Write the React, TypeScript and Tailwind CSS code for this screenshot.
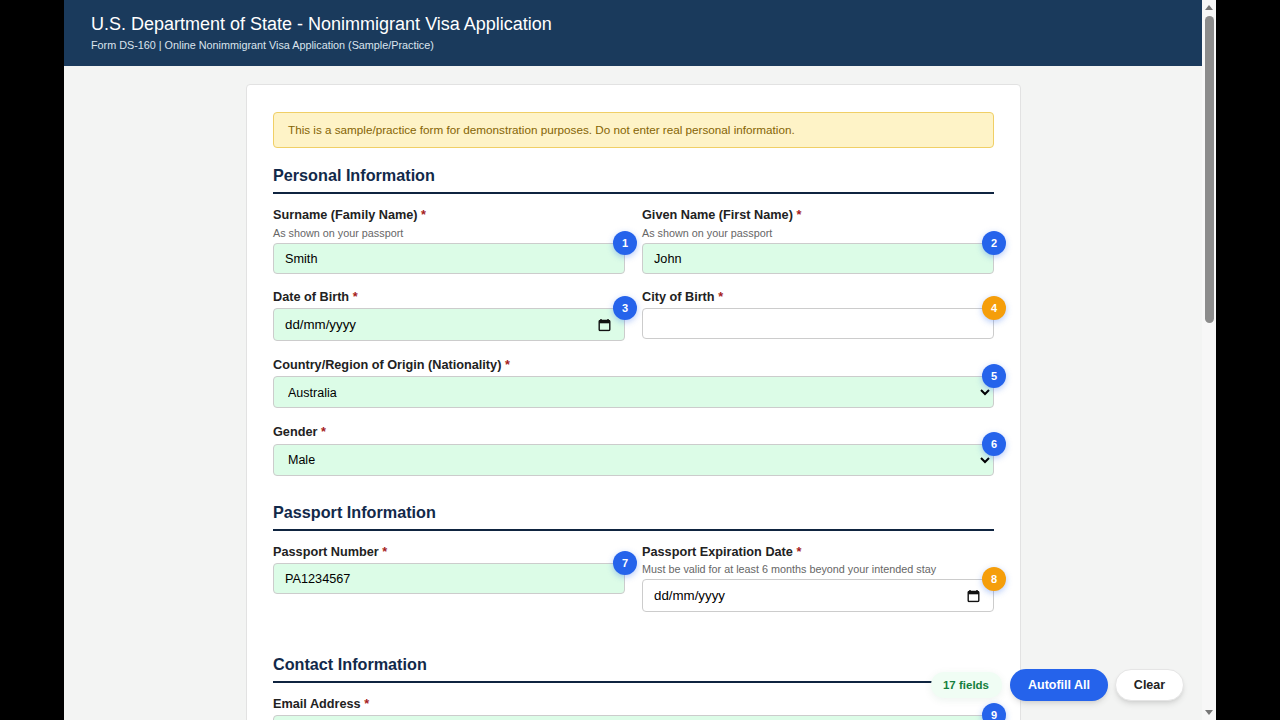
const Badge = ({ n, warn }: { n: number; warn?: boolean }) => (
  <span
    className={`absolute -right-3 -top-3 z-10 flex h-6 w-6 items-center justify-center rounded-full text-[11px] font-bold text-white shadow-[0_2px_6px_rgba(37,99,235,0.35)] ${
      warn ? "bg-[#f59e0b]" : "bg-[#2563eb]"
    }`}
  >
    {n}
  </span>
);

const Label = ({ text, mb = "mb-[3px]" }: { text: string; mb?: string }) => (
  <label className={`block h-4 text-[12.7px] leading-4 font-bold text-[#222] ${mb}`}>
    {text} <span className="text-[#a51c1c]">*</span>
  </label>
);

const Hint = ({ text }: { text: string }) => (
  <p className="mb-[3px] h-[14px] text-[10.8px] leading-[14px] text-[#666]">{text}</p>
);

const CalendarIcon = () => (
  <svg className="absolute right-[14px] top-1/2 h-[13px] w-[13px] -translate-y-1/2" viewBox="0 0 13 13" fill="none">
    <path d="M3 0.5v2M10 0.5v2" stroke="#111" strokeWidth="1.4" />
    <rect x="1.2" y="2" width="10.6" height="10" rx="1" stroke="#111" strokeWidth="1.4" />
    <rect x="1.2" y="2" width="10.6" height="2.8" fill="#111" />
  </svg>
);

const Field = ({
  label,
  hint,
  value,
  n,
  warn,
  date,
  tight,
  filled = true,
}: {
  label: string;
  hint?: string;
  value?: string;
  n: number;
  warn?: boolean;
  date?: boolean;
  tight?: boolean;
  filled?: boolean;
}) => (
  <div>
    <Label text={label} mb={tight ? "mb-[2px]" : "mb-[3px]"} />
    {hint && <Hint text={hint} />}
    <div className="relative">
      <input
        readOnly
        value={value ?? ""}
        className={`block w-full rounded border border-[#ccc] px-[11px] text-black outline-none ${
          date ? "h-[33px] text-[13.3px]" : "h-[31px] text-[12.7px]"
        } ${filled ? "bg-[#dcfce7]" : "bg-white"}`}
      />
      {date && <CalendarIcon />}
      <Badge n={n} warn={warn} />
    </div>
  </div>
);

const SelectField = ({ label, value, n, low }: { label: string; value: string; n: number; low?: boolean }) => (
  <div>
    <Label text={label} mb={low ? "mb-1" : "mb-[3px]"} />
    <div className="relative">
      <select
        defaultValue={value}
        className={`block h-[32px] w-full rounded border border-[#ccc] bg-[#dcfce7] px-[10px] text-[12.5px] text-black outline-none ${
          low ? "" : "pt-px"
        }`}
      >
        <option>{value}</option>
      </select>
      <Badge n={n} />
    </div>
  </div>
);

const SectionTitle = ({ text }: { text: string }) => (
  <h2 className="border-b-2 border-[#0f2440] pb-[7px] text-[16.2px] leading-[19px] font-bold text-[#12294a]">{text}</h2>
);

export default function App() {
  return (
    <div className="flex h-screen w-full overflow-hidden bg-black font-['Liberation_Sans',Arial,sans-serif]">
      <div className="w-16 shrink-0 bg-black" />

      <div className="relative min-w-0 flex-1 overflow-hidden bg-[#f3f4f3]">
        <header className="h-[66px] bg-[#1a3a5c] px-[27px] pt-[12px] text-white">
          <h1 className="text-[18px] leading-[24px] font-normal">U.S. Department of State - Nonimmigrant Visa Application</h1>
          <p className="mt-[2px] text-[10.8px] leading-[14px] text-[#dbe4ee]">
            Form DS-160 | Online Nonimmigrant Visa Application (Sample/Practice)
          </p>
        </header>

        <main className="mt-[18px] ml-[182px] w-[775px] rounded border border-[#e2e2e2] bg-white px-[26px] pt-[27px] pb-10">
          <div className="flex h-[36px] items-center rounded border border-[#f0cf66] bg-[#fef3c7] px-[14px] text-[11.7px] text-[#856404]">
            This is a sample/practice form for demonstration purposes. Do not enter real personal information.
          </div>

          <section className="mt-[18px]">
            <SectionTitle text="Personal Information" />
            <div className="mt-[13px] flex flex-col gap-[16px]">
              <div className="mb-[-1px] grid grid-cols-2 gap-x-[17px]">
                <Field label="Surname (Family Name)" hint="As shown on your passport" value="Smith" n={1} />
                <Field label="Given Name (First Name)" hint="As shown on your passport" value="John" n={2} />
              </div>
              <div className="grid grid-cols-2 gap-x-[17px]">
                <Field label="Date of Birth" value="dd/mm/yyyy" n={3} date />
                <Field label="City of Birth" n={4} warn filled={false} />
              </div>
              <SelectField label="Country/Region of Origin (Nationality)" value="Australia" n={5} />
              <SelectField label="Gender" value="Male" n={6} low />
            </div>
          </section>

          <section className="mt-[27px]">
            <SectionTitle text="Passport Information" />
            <div className="mt-[13px] grid grid-cols-2 gap-x-[17px]">
              <Field label="Passport Number" value="PA1234567" n={7} />
              <Field
                label="Passport Expiration Date"
                hint="Must be valid for at least 6 months beyond your intended stay"
                value="dd/mm/yyyy"
                n={8}
                warn
                date
                tight
                filled={false}
              />
            </div>
          </section>

          <section className="mt-[43px]">
            <SectionTitle text="Contact Information" />
            <div className="mt-[13px]">
              <Field label="Email Address" value="john.smith@example.com" n={9} />
            </div>
          </section>
        </main>

        <div className="absolute right-[18px] bottom-[19px] z-20 flex items-center gap-2">
          <span className="flex h-[26px] items-center rounded-full bg-[#f0fdf4] pt-[1px] pr-[13px] pl-3 text-[11.5px] font-bold text-[#15803d] shadow-[0_2px_8px_rgba(22,101,52,0.08)]">
            17 fields
          </span>
          <button className="h-8 w-[98px] rounded-full bg-[#2563eb] pt-[1px] text-[12.5px] font-bold text-white shadow-md">Autofill All</button>
          <button className="-ml-px h-8 w-[69px] rounded-full border border-[#e5e5e5] bg-white pt-[1px] text-[12.5px] font-bold text-[#222] shadow-md">Clear</button>
        </div>
      </div>

      <div className="relative w-[14px] shrink-0 bg-[#f7f7f7]">
        <svg className="absolute left-[3px] top-[5px] h-[5px] w-2" viewBox="0 0 8 5"><path d="M4 0l4 5H0z" fill="#777" /></svg>
        <div className="mx-auto mt-[16px] h-[307px] w-[9px] rounded-full bg-[#8c8c8c]" />
        <svg className="absolute bottom-[5px] left-[3px] h-[5px] w-2" viewBox="0 0 8 5"><path d="M4 5l4-5H0z" fill="#777" /></svg>
      </div>

      <div className="w-16 shrink-0 bg-black" />
    </div>
  );
}
